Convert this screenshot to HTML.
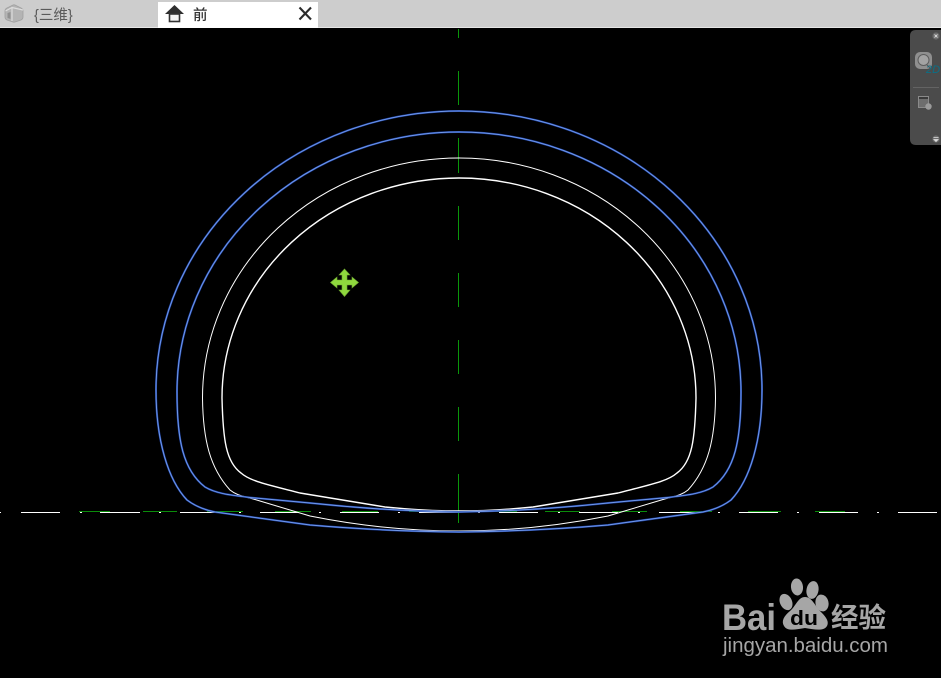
<!DOCTYPE html>
<html lang="zh">
<head>
<meta charset="utf-8">
<title>前</title>
<style>
html,body{margin:0;padding:0;background:#000;width:941px;height:678px;overflow:hidden}
svg{display:block;position:absolute;left:0;top:0}
</style>
</head>
<body>
<svg width="941" height="678" viewBox="0 0 941 678" xmlns="http://www.w3.org/2000/svg">
<rect width="941" height="678" fill="#000"/>

<!-- tab bar -->
<rect x="0" y="0" width="941" height="27" fill="#cdcdcd"/>
<rect x="0" y="27" width="941" height="1" fill="#e6e6e6"/>
<rect x="158" y="2" width="160" height="26" fill="#fff"/>

<!-- inactive house icon -->
<path d="M5 11 Q5 9 7 8 L13 5 Q14 4.6 15 5 L21 8 Q23 9 23 11 L23 17 Q23 19 21 20 L15 22 Q14 22.4 13 22 L7 20 Q5 19 5 17 Z" fill="#b4b4b4" stroke="#a0a0a0" stroke-width="0.8"/>
<path d="M5.5 11 L12 7.5 L23 10 M12 8 L12 21" fill="none" stroke="#dcdcdc" stroke-width="1.2"/>
<path d="M7.5 13 L10.5 12 L10.5 19 L7.5 18 Z" fill="#909090"/>
<text x="34" y="20" font-family="'Liberation Sans','Noto Sans CJK SC',sans-serif" font-size="14.5" fill="#5a5a5a">{三维}</text>

<!-- active home icon -->
<path d="M165 14 L174.5 5 L184 14 Z" fill="#2e2e2e"/>
<rect x="169.5" y="14" width="10" height="7.5" fill="#f4f4f4" stroke="#333" stroke-width="1.6"/>
<text x="193" y="20" font-family="'Liberation Sans','Noto Sans CJK SC',sans-serif" font-size="14.5" font-weight="500" fill="#333">前</text>
<path d="M299.5 7.5 L311 19.5 M311 7.5 L299.5 19.5" stroke="#2b2b2b" stroke-width="2.1" fill="none"/>

<!-- horizontal centre line -->
<g fill="#fff">
<rect x="0" y="512" width="1" height="1"/>
<rect x="21" y="512" width="39" height="1"/><rect x="80" y="512" width="2" height="1"/>
<rect x="100" y="512" width="40" height="1"/><rect x="159" y="512" width="2" height="1"/>
<rect x="180" y="512" width="40" height="1"/><rect x="239" y="512" width="2" height="1"/>
<rect x="260" y="512" width="39" height="1"/><rect x="319" y="512" width="2" height="1"/>
<rect x="340" y="512" width="39" height="1"/><rect x="398" y="512" width="2" height="1"/>
<rect x="419" y="512" width="40" height="1"/><rect x="478" y="512" width="2" height="1"/>
<rect x="499" y="512" width="39" height="1"/><rect x="558" y="512" width="2" height="1"/>
<rect x="579" y="512" width="39" height="1"/><rect x="638" y="512" width="2" height="1"/>
<rect x="659" y="512" width="39" height="1"/><rect x="718" y="512" width="2" height="1"/>
<rect x="739" y="512" width="39" height="1"/><rect x="797" y="512" width="2" height="1"/>
<rect x="819" y="512" width="39" height="1"/><rect x="877" y="512" width="2" height="1"/>
<rect x="898" y="512" width="39" height="1"/>
</g>
<g fill="#0a8c0a">
<rect x="79" y="511" width="31" height="1"/><rect x="143" y="511" width="34" height="1"/>
<rect x="207" y="511" width="36" height="1"/><rect x="275" y="511" width="36" height="1"/>
<rect x="342" y="511" width="36" height="1"/><rect x="409" y="511" width="38" height="1"/>
<rect x="480" y="511" width="37" height="1"/><rect x="545" y="511" width="35" height="1"/>
<rect x="612" y="511" width="35" height="1"/><rect x="680" y="511" width="32" height="1"/>
<rect x="748" y="511" width="33" height="1"/><rect x="815" y="511" width="30" height="1"/>
</g>
<!-- vertical centre line -->
<g fill="#0a960a">
<rect x="458" y="29" width="1" height="9"/><rect x="458" y="71" width="1" height="34"/>
<rect x="458" y="138" width="1" height="35"/><rect x="458" y="206" width="1" height="34"/>
<rect x="458" y="273" width="1" height="34"/><rect x="458" y="340" width="1" height="34"/>
<rect x="458" y="407" width="1" height="34"/><rect x="458" y="474" width="1" height="49"/>
</g>

<defs>
<path id="w1" d="M459 158 A256.5 240 0 0 0 202.5 398 C203 440 210 468 230 490 C236 495 242 496 255 499.5 L310 516 Q385 531 459 531"/>
<path id="w2" d="M459 178 A237 220 0 0 0 222 398 C223 440 226 462 241 473 C250 481 265 484 300 493 L385 507 Q425 511 459 511"/>
<path id="b1" d="M459 111 A303 279 0 0 0 156 390 C156 440 168 480 187 500 C195 506 205 510 215 512 L310 525 Q380 531 459 532"/>
<path id="b2" d="M459 132 A282 260 0 0 0 177 392 C177 440 183 470 205 487 C215 493 228 495 250 497.5 L310 503 Q385 511 459 512"/>
</defs>

<!-- white profiles -->
<g fill="none" stroke="#fff" stroke-linejoin="round">
<use href="#w1" stroke-width="1"/>
<use href="#w1" stroke-width="1" transform="translate(918 0) scale(-1 1)"/>
<use href="#w2" stroke-width="1.4"/>
<use href="#w2" stroke-width="1.4" transform="translate(918 0) scale(-1 1)"/>
</g>
<!-- blue profiles -->
<g fill="none" stroke="#1d3f9e" stroke-width="2" stroke-linejoin="round">
<use href="#b1"/>
<use href="#b1" transform="translate(918 0) scale(-1 1)"/>
<use href="#b2"/>
<use href="#b2" transform="translate(918 0) scale(-1 1)"/>
</g>
<g fill="none" stroke="#6f98ea" stroke-width="1" stroke-linejoin="round">
<use href="#b1"/>
<use href="#b1" transform="translate(918 0) scale(-1 1)"/>
<use href="#b2"/>
<use href="#b2" transform="translate(918 0) scale(-1 1)"/>
</g>

<!-- move cursor -->
<path d="M344.5 269 L350 275 L347 275 L347 280 L352 280 L352 277 L358.5 282.5 L352 288 L352 285 L347 285 L347 290 L350 290 L344.5 296.5 L339 290 L342 290 L342 285 L337 285 L337 288 L330.5 282.5 L337 277 L337 280 L342 280 L342 275 L339 275 Z" fill="#8fd83e" stroke="#6fa82f" stroke-width="0.6"/>

<!-- nav toolbar -->
<path d="M941 30 L916 30 Q910 30 910 36 L910 139 Q910 145 916 145 L941 145 Z" fill="#4b4b4b"/>
<circle cx="936" cy="36" r="3.6" fill="#6c6c6c"/>
<path d="M934.5 34.5 L937.5 37.5 M937.5 34.5 L934.5 37.5" stroke="#ddd" stroke-width="0.9"/>
<rect x="915" y="52" width="17" height="17" rx="5" fill="#8f8f8f"/>
<circle cx="923.5" cy="60" r="5.5" fill="#a3a3a3" stroke="#5c5c5c" stroke-width="1"/>
<path d="M927 65 L931 69" stroke="#555" stroke-width="1"/>
<text x="926" y="73" font-family="'Liberation Sans',sans-serif" font-size="11" font-style="italic" fill="#0b6f86">2D</text>
<rect x="913" y="87" width="26" height="1" fill="#636363"/>
<rect x="918.5" y="96.5" width="10" height="11" fill="#6e6e6e" stroke="#8a8a8a" stroke-width="1"/>
<rect x="919" y="97" width="9" height="2" fill="#3a3a3a"/>
<circle cx="928.5" cy="106.5" r="3.2" fill="#9b9b9b"/>
<circle cx="936" cy="139" r="3.6" fill="#6c6c6c"/>
<path d="M933.5 137.5 H938.5 M934 139.5 L938 139.5 L936 141.5 Z" stroke="#ddd" stroke-width="0.8" fill="#ddd"/>

<!-- watermark -->
<g fill="#a6a6a6">
<text x="722" y="630" font-family="'Liberation Sans',sans-serif" font-size="37" font-weight="700" textLength="54" lengthAdjust="spacingAndGlyphs">Bai</text>
<ellipse cx="797" cy="587" rx="6" ry="8.5" transform="rotate(-6 797 587)"/>
<ellipse cx="812.5" cy="590" rx="6" ry="9" transform="rotate(10 812.5 590)"/>
<ellipse cx="786" cy="602" rx="6" ry="8.5" transform="rotate(-25 786 602)"/>
<ellipse cx="822" cy="603" rx="6.5" ry="8.5" transform="rotate(-12 822 603)"/>
<path d="M805 597 C812 597 815 606 821 612 C827 618 829 622 827 626 C824 631 816 630 805 628 C794 630 787 631 784 626 C781 621 784 616 790 611 C796 606 798 597 805 597 Z"/>
</g>
<text x="790" y="625" font-family="'Liberation Sans',sans-serif" font-size="20" font-weight="700" fill="#000" textLength="28" lengthAdjust="spacingAndGlyphs">du</text>
<text x="831" y="627" font-family="'Liberation Sans','Noto Sans CJK SC',sans-serif" font-size="27.5" font-weight="700" fill="#a6a6a6">经验</text>
<text x="723" y="652" font-family="'Liberation Sans',sans-serif" font-size="20.5" fill="#a6a6a6" textLength="165" lengthAdjust="spacing">jingyan.baidu.com</text>
</svg>
</body>
</html>
